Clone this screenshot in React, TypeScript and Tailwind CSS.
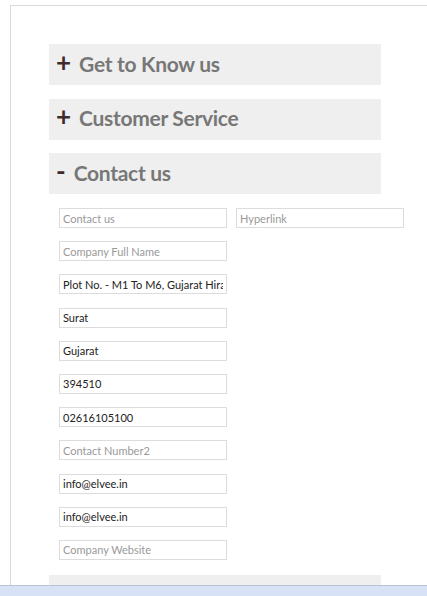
import React from 'react';

const fields: { value?: string; placeholder: string; extra?: string }[] = [
  { placeholder: 'Contact us', extra: 'Hyperlink' },
  { placeholder: 'Company Full Name' },
  { placeholder: 'Address', value: 'Plot No. - M1 To M6, Gujarat Hira Bourse' },
  { placeholder: 'City', value: 'Surat' },
  { placeholder: 'State', value: 'Gujarat' },
  { placeholder: 'Pincode', value: '394510' },
  { placeholder: 'Contact Number1', value: '02616105100' },
  { placeholder: 'Contact Number2' },
  { placeholder: 'Email1', value: 'info@elvee.in' },
  { placeholder: 'Email2', value: 'info@elvee.in' },
  { placeholder: 'Company Website' },
];

const inputCls =
  "w-[168px] h-[20px] border border-[#dcdcdc] bg-white px-[3px] text-[11px] text-[#222] placeholder:text-[#999] outline-none font-['Lato','Open_Sans',sans-serif]";

function Header({ sign, title }: { sign: string; title: string }) {
  return (
    <div className="w-[332px] h-[41px] bg-[#efefef] flex items-center pl-[7px] gap-[8px]">
      <span className="text-[26px] leading-none font-bold text-[#3f2a2d] -mt-[6px]">{sign}</span>
      <span className="text-[21px] font-bold text-[#777] tracking-[-0.3px] -mt-[2px]">{title}</span>
    </div>
  );
}

export default function App() {
  return (
    <div className="w-[427px] h-[596px] bg-white relative overflow-hidden font-['Lato','Open_Sans',sans-serif]">
      <div className="ml-[10px] mt-[5px] border-l border-t border-[#dadada] pl-[38px] pt-[38px] flex flex-col gap-[13.5px]">
        <Header sign="+" title="Get to Know us" />
        <Header sign="+" title="Customer Service" />
        <div className="flex flex-col">
          <Header sign="-" title="Contact us" />
          <div className="pl-[10px] pt-[14px] flex flex-col gap-[13.2px]">
            {fields.map((f, i) => (
              <div key={i} className="flex gap-[9px]">
                <input className={inputCls} placeholder={f.placeholder} defaultValue={f.value} />
                {f.extra && <input className={inputCls} placeholder={f.extra} />}
              </div>
            ))}
          </div>
          <div className="mt-[15px]">
            <Header sign="+" title="Other" />
          </div>
        </div>
      </div>
      <div className="absolute left-0 right-0 bottom-0 h-[11px] bg-[#d7e2f6] border-t border-[#b9c3d3]" />
    </div>
  );
}
